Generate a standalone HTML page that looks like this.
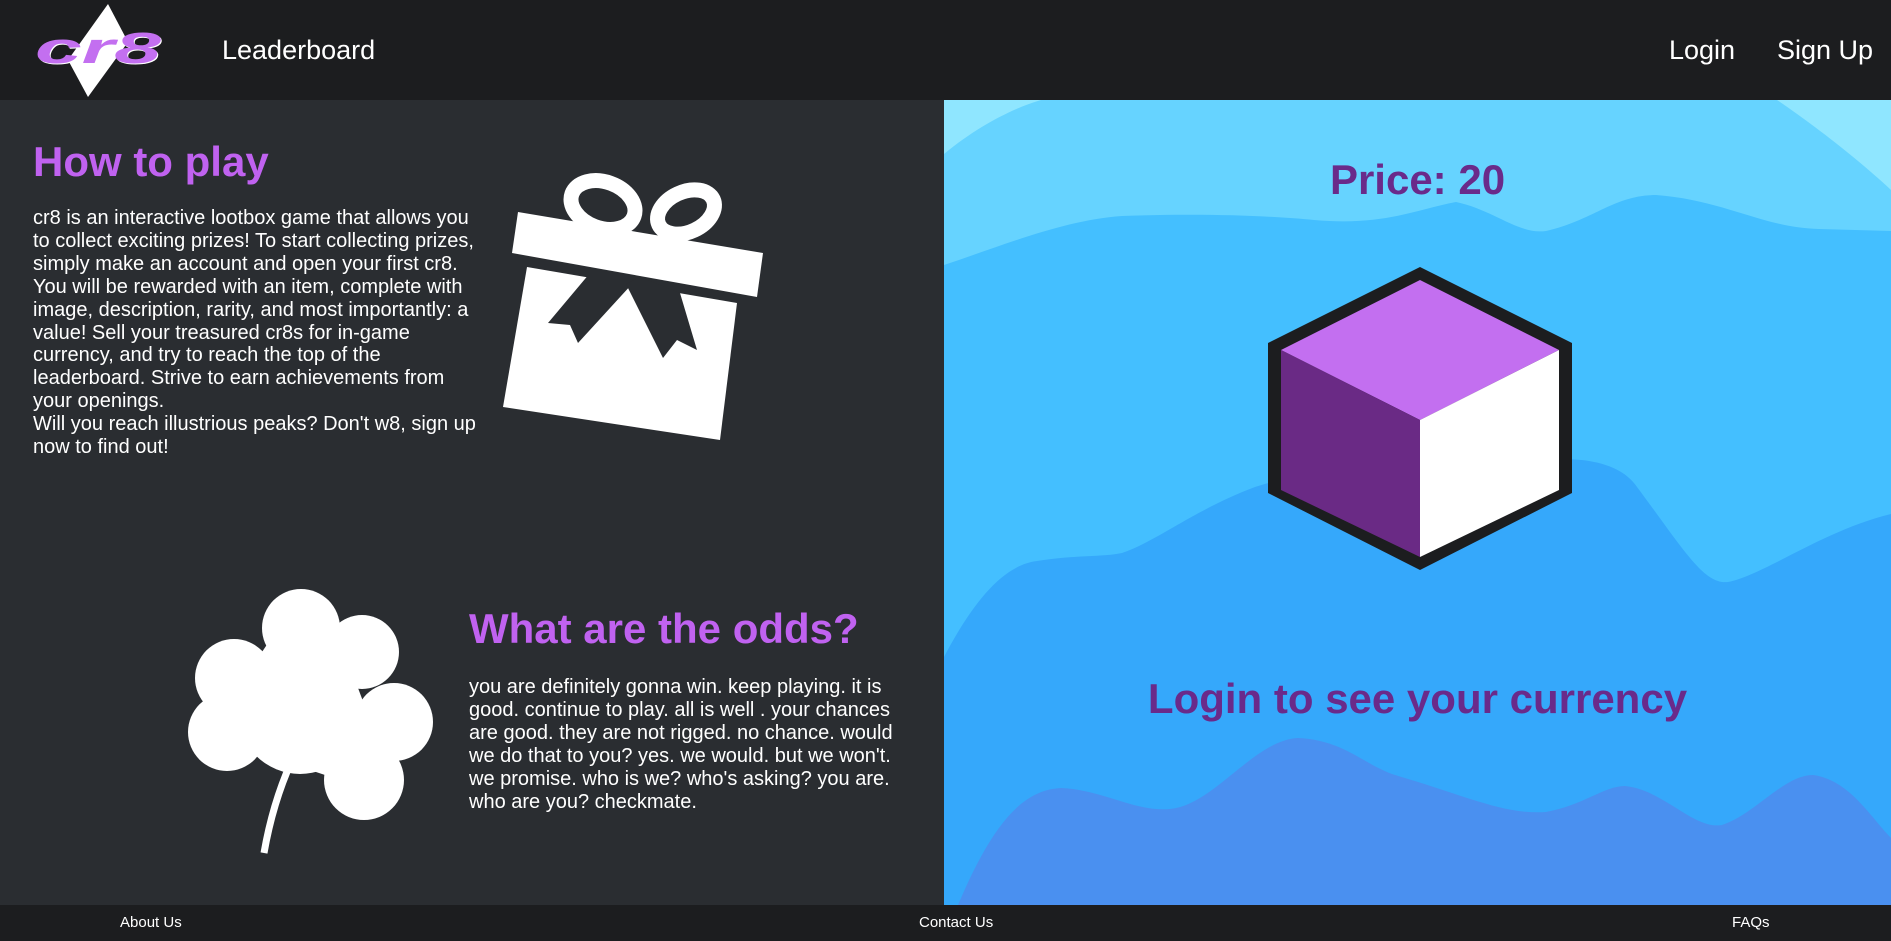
<!DOCTYPE html>
<html><head><meta charset="utf-8"><style>
*{margin:0;padding:0;box-sizing:border-box}
body{width:1891px;height:941px;overflow:hidden;background:#2a2d31;font-family:"Liberation Sans",Arial,sans-serif;position:relative}
.nav{position:absolute;left:0;top:0;width:1891px;height:100px;background:#1c1d1f}
.nav a{position:absolute;color:#fff;font-size:27px;line-height:100px;top:0;text-decoration:none}
.left{position:absolute;left:0;top:100px;width:944px;height:805px;background:#2a2d31}
h1{position:absolute;color:#c062f0;font-size:42px;font-weight:bold;white-space:nowrap}
.p{position:absolute;color:#fff;font-size:20px;line-height:22.9px;white-space:nowrap}
.right{position:absolute;left:944px;top:100px;width:947px;height:805px;overflow:hidden}
.foot{position:absolute;left:0;top:905px;width:1891px;height:36px;background:#1c1d1f}
.foot span{position:absolute;color:#fff;font-size:15px;top:9px}
.r h2{position:absolute;color:#6a2a8a;font-size:42px;font-weight:bold;white-space:nowrap;width:947px;text-align:center;left:0}
</style></head><body>
<div class="nav">
<svg style="position:absolute;left:0;top:0" width="180" height="100">
<polygon points="108,4 128,42 88,97 68,60" fill="#fff"/>
<text x="36" y="64" font-family="Liberation Sans" font-weight="bold" font-style="italic" font-size="44" fill="#fff" textLength="126" lengthAdjust="spacingAndGlyphs">cr8</text>
<text x="35" y="63" font-family="Liberation Sans" font-weight="bold" font-style="italic" font-size="44" fill="#c36ff0" textLength="126" lengthAdjust="spacingAndGlyphs">cr8</text>
</svg>
<a style="left:222px">Leaderboard</a>
<a style="left:1669px">Login</a>
<a style="left:1777px">Sign Up</a>
</div>
<div class="left">
<h1 style="left:33px;top:38px">How to play</h1>
<div class="p" style="left:33px;top:107px">cr8 is an interactive lootbox game that allows you<br>to collect exciting prizes! To start collecting prizes,<br>simply make an account and open your first cr8.<br>You will be rewarded with an item, complete with<br>image, description, rarity, and most importantly: a<br>value! Sell your treasured cr8s for in-game<br>currency, and try to reach the top of the<br>leaderboard. Strive to earn achievements from<br>your openings.<br>Will you reach illustrious peaks? Don't w8, sign up<br>now to find out!</div>
<h1 style="left:469px;top:505px">What are the odds?</h1>
<div class="p" style="left:469px;top:576px">you are definitely gonna win. keep playing. it is<br>good. continue to play. all is well . your chances<br>are good. they are not rigged. no chance. would<br>we do that to you? yes. we would. but we won't.<br>we promise. who is we? who's asking? you are.<br>who are you? checkmate.</div>
</div>
<svg style="position:absolute;left:0;top:0" width="944" height="905">
<polygon points="527,267 737,303 720,440 503,407" fill="#fff"/>
<g fill="#2a2d31">
<polygon points="623,273 590,273 548,323 570,325 578,343 632,284"/>
<polygon points="626,284 640,277 680,293 697,350 677,340 663,358"/>
</g>
<g fill="none" stroke="#fff" stroke-width="15">
<ellipse cx="603" cy="205" rx="33" ry="23" transform="rotate(20 603 205)"/>
<ellipse cx="686" cy="212" rx="30" ry="20" transform="rotate(-25 686 212)"/>
</g>
<polygon points="518,212 763,253 757,297 512,253" fill="#fff"/>
<g fill="#fff">
<circle cx="301" cy="628" r="39"/><circle cx="362" cy="652" r="37"/>
<circle cx="234" cy="678" r="39"/><circle cx="227" cy="732" r="39"/>
<circle cx="394" cy="722" r="39"/><circle cx="364" cy="780" r="40"/>
<circle cx="300" cy="712" r="62"/>
<polygon points="270,640 340,640 370,720 340,780 250,750 230,700"/>
</g>
<path d="M302,740 Q275,790 264,853" stroke="#fff" stroke-width="7" fill="none"/>
</svg>
<div class="right r">
<svg style="position:absolute;left:0;top:0" width="947" height="805" viewBox="0 0 947 805">
<rect width="947" height="805" fill="#8fe6ff"/>
<path d="M0,54 C35,25 70,8 97,0 L833,0 C870,25 915,60 947,90 L947,805 L0,805Z" fill="#66d3ff"/>
<path d="M0,165 C60,145 120,120 178,116 C260,113 330,116 370,120 C440,126 470,110 512,102 C550,110 575,135 602,131 C650,120 670,95 712,95 C780,100 820,128 875,129 L947,131 L947,805 L0,805Z" fill="#44bfff"/>
<path d="M0,557 C30,500 60,465 93,461 C130,455 160,457 178,453 C215,440 250,410 311,387 C380,365 430,367 469,367 C560,365 610,355 645,361 C670,365 685,375 693,387 C740,450 760,485 784,482 C820,475 880,430 947,414 L947,805 L0,805Z" fill="#35a8fb"/>
<path d="M14,805 C50,720 80,690 117,688 C160,690 190,712 226,709 C270,705 310,640 354,638 C400,640 420,665 451,675 C520,695 560,715 602,712 C640,705 660,686 681,686 C720,690 750,730 778,725 C810,715 840,675 869,675 C905,680 925,715 947,738 L947,805Z" fill="#4a90f0"/>
<g transform="translate(-944,-100)">
<polygon points="1420,267 1572,343 1572,493 1420,570 1268,493 1268,343" fill="#1c1d1f"/>
<polygon points="1420,280 1559,350 1420,420 1281,350" fill="#c36ff0"/>
<polygon points="1281,350 1420,420 1420,557 1281,490" fill="#6a2a85"/>
<polygon points="1559,350 1420,420 1420,557 1559,490" fill="#fff"/>
</g>
</svg>
<h2 style="top:56px">Price: 20</h2>
<h2 style="top:575px">Login to see your currency</h2>
</div>
<div class="foot">
<span style="left:120px">About Us</span>
<span style="left:919px">Contact Us</span>
<span style="left:1732px">FAQs</span>
</div>
</body></html>
